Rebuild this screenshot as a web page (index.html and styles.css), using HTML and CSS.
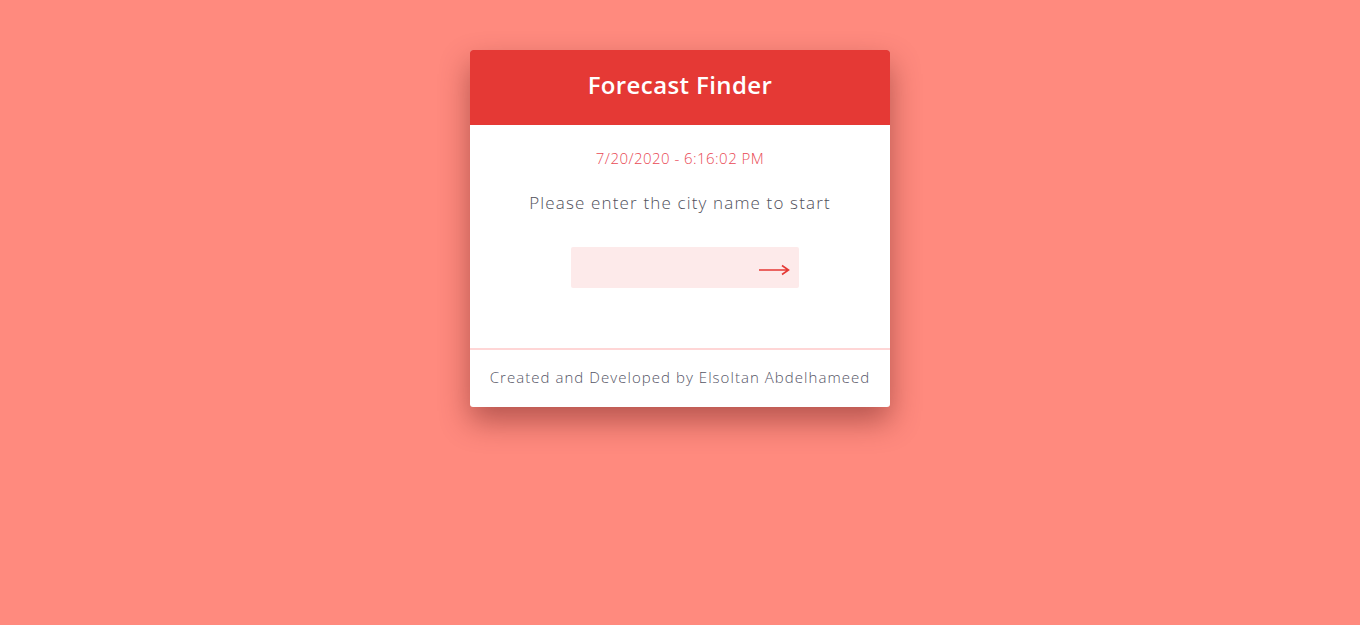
FILE: index.html
```html
<!DOCTYPE html>
<html lang="en">
<head>
<meta charset="utf-8">
<title>Forecast Finder</title>
<link rel="stylesheet" href="styles.css">
</head>
<body>
<main class="page">
  <section class="card">
    <header class="card-header">
      <h1 class="title">Forecast Finder</h1>
    </header>
    <div class="card-body">
      <p class="date">7/20/2020 - 6:16:02 PM</p>
      <p class="prompt">Please enter the city name to start</p>
      <form class="search">
        <input class="search-input" type="text" aria-label="City name">
        <button class="search-btn" type="button" aria-label="Search">
          <svg width="32" height="12" viewBox="0 0 32 12"><path d="M1 6H30M24 1.5L30.5 6L24 10.5" fill="none" stroke="#e53935" stroke-width="1.6"/></svg>
        </button>
      </form>
    </div>
    <footer class="card-footer">Created and Developed by Elsoltan Abdelhameed</footer>
  </section>
</main>
</body>
</html>
```
FILE: styles.css
```css
* { box-sizing: border-box; }
html, body { margin: 0; padding: 0; }
body {
  background: #ff8a7e;
  font-family: "Open Sans", "Noto Sans", sans-serif;
  min-height: 625px;
}
.page {
  display: flex;
  justify-content: center;
  padding-top: 50px;
}
.card {
  width: 420px;
  background: #fff;
  border-radius: 3px;
  box-shadow: 0 14px 30px rgba(90, 20, 20, 0.45);
  overflow: hidden;
}
.card-header {
  background: #e53935;
  height: 75px;
  padding-bottom: 7px;
  display: flex;
  align-items: center;
  justify-content: center;
}
.title {
  margin: 0;
  color: #fff;
  font-size: 24px;
  font-weight: 600;
  letter-spacing: 0.4px;
}
.card-body {
  padding: 23px 0 60px;
  display: flex;
  flex-direction: column;
  align-items: center;
  border-bottom: 2px solid #ffd6d6;
}
.date {
  margin: 0;
  color: #e94a55;
  font-size: 15px;
  font-weight: 300;
  line-height: 20px;
  letter-spacing: 0.45px;
}
.prompt {
  margin: 23px 0 0;
  color: #4f4f5a;
  font-size: 17px;
  font-weight: 300;
  line-height: 24px;
  letter-spacing: 1.15px;
}
.search {
  margin: 32px 0 0 10px;
  width: 228px;
  height: 41px;
  background: #fdeaea;
  border-radius: 2px;
  display: flex;
  align-items: center;
}
.search-input {
  flex: 1;
  min-width: 0;
  height: 100%;
  border: 0;
  background: transparent;
  outline: none;
  padding: 0 10px;
}
.search-btn {
  border: 0;
  background: transparent;
  padding: 4px 9px 0 0;
  height: 100%;
  display: flex;
  align-items: center;
  cursor: pointer;
}
.card-footer {
  height: 57px;
  padding-bottom: 3px;
  display: flex;
  align-items: center;
  justify-content: center;
  color: #555566;
  font-size: 15px;
  font-weight: 300;
  letter-spacing: 1.05px;
}
```
